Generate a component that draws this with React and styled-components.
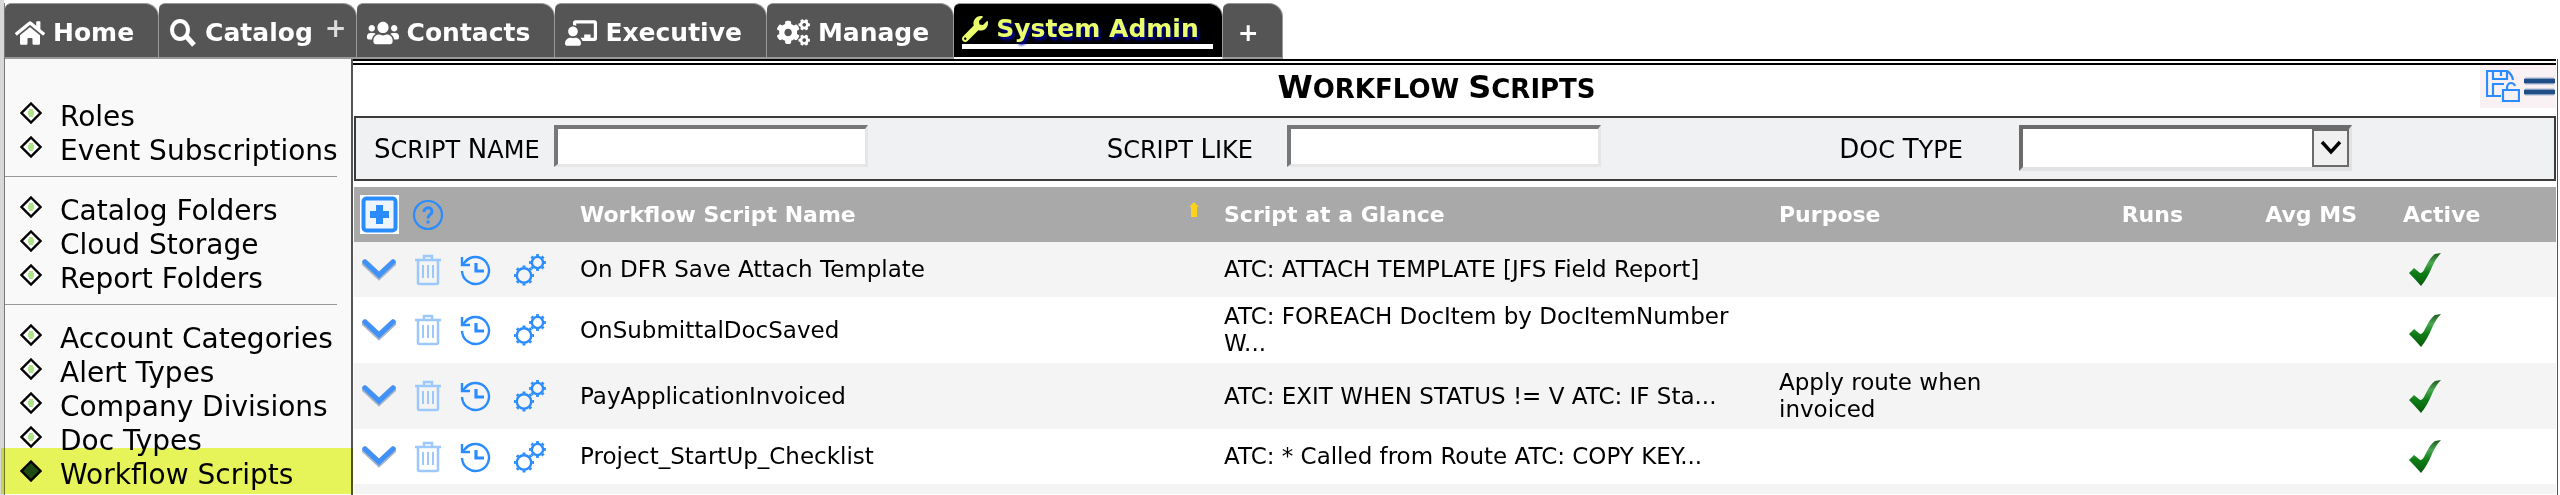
import React from 'react';
import styled, { createGlobalStyle, css } from 'styled-components';
import {
  FaHome,
  FaUsers,
  FaChalkboardTeacher,
  FaCogs,
  FaWrench,
} from 'react-icons/fa';

const blue = '#2a8cff';
const tabGrey = '#555555';
const headGrey = '#a9a9a9';
const lime = '#eaff6b';

const menu = [
  ['Roles', 'Event Subscriptions'],
  ['Catalog Folders', 'Cloud Storage', 'Report Folders'],
  [
    'Account Categories',
    'Alert Types',
    'Company Divisions',
    'Doc Types',
    'Workflow Scripts',
  ],
];

const scripts = [
  {
    name: 'On DFR Save Attach Template',
    glance: 'ATC: ATTACH TEMPLATE [JFS Field Report]',
  },
  {
    name: 'OnSubmittalDocSaved',
    glance: 'ATC: FOREACH DocItem by DocItemNumber W...',
  },
  {
    name: 'PayApplicationInvoiced',
    glance: 'ATC: EXIT WHEN STATUS != V ATC: IF Sta...',
    purpose: 'Apply route when invoiced',
  },
  {
    name: 'Project_StartUp_Checklist',
    glance: 'ATC: * Called from Route ATC: COPY KEY...',
  },
];

const SearchIcon = () => (
  <svg width="28" height="28" viewBox="0 0 28 28" fill="none" stroke="#fff">
    <ellipse cx="11" cy="11" rx="8" ry="9" strokeWidth="4" />
    <path d="M17 17l8 9" strokeWidth="5" />
  </svg>
);

const Diamond = ({ filled }) => (
  <svg width="22" height="22" viewBox="0 0 22 22">
    <path
      d="M11 1.5L20.5 11L11 20.5L1.5 11Z"
      fill={filled ? '#1f4d31' : '#fff'}
      stroke="#000"
      strokeWidth="2.4"
    />
    {!filled && <path d="M11 7v8M8 11h6" stroke="#aee58c" strokeWidth="4" />}
  </svg>
);

const PlusBoxIcon = () => (
  <svg width="39" height="39" viewBox="0 0 39 39">
    <path d="M0 0h39v39H0z" fill="#fff" />
    <rect x="3.5" y="3.5" width="32" height="32" rx="3" fill="#eef5ff" stroke={blue} strokeWidth="4" />
    <path d="M19.5 10v19M10 19.5h19" stroke={blue} strokeWidth="7" />
  </svg>
);

const HelpIcon = () => (
  <svg width="32" height="32" viewBox="0 0 32 32" fill="none" stroke={blue}>
    <circle cx="16" cy="16" r="14" strokeWidth="2.2" />
    <path d="M12 13c0-5.500 8-5.500 8-.500 0 3-4 3-4 7" strokeWidth="3" />
    <path d="M16 21.500v3" strokeWidth="3" />
  </svg>
);

const ChevronIcon = () => (
  <svg width="34" height="22" viewBox="0 0 34 22" fill="none">
    <path d="M3 4l14 13L31 4" stroke="#a9b4c4" strokeWidth="7" strokeLinecap="round" />
    <path d="M3 3l14 13L31 3" stroke="#3f92fa" strokeWidth="5" strokeLinecap="round" />
  </svg>
);

const TrashIcon = () => (
  <svg width="26" height="32" viewBox="0 0 26 32" fill="none" stroke="#9dc8fc">
    <path d="M0 6h26M9 5V2h8v3M3 6v23q0 1 2 1h16q2 0 2-1V6" strokeWidth="2.500" />
    <path d="M8 11v13M13 11v13M18 11v13" strokeWidth="2" />
  </svg>
);

const HistoryIcon = () => (
  <svg width="32" height="32" viewBox="0 0 32 32" fill="none" stroke={blue}>
    <path d="M5 8a13.500 13.500 0 1 1-3 9" strokeWidth="2.400" />
    <path d="M2 3v8h8" strokeWidth="2.400" />
    <path d="M3 10l5-5" strokeWidth="2.400" />
    <path d="M16 9v8h8" strokeWidth="3.200" />
  </svg>
);

const gearTeeth = [0, 45, 90, 135, 180, 225, 270, 315];

const Gear = ({ x, y, r }) => (
  <g transform={`translate(${x} ${y})`}>
    <circle r={r} strokeWidth="2.400" />
    {gearTeeth.map(angle => (
      <path
        key={angle}
        d={`M0 ${-r - 1}v-1.800`}
        strokeWidth="3"
        transform={`rotate(${angle})`}
      />
    ))}
  </g>
);

const GearsIcon = () => (
  <svg width="32" height="32" viewBox="0 0 32 32" fill="none" stroke={blue}>
    <Gear x={10} y={21.5} r={7.2} />
    <Gear x={23.5} y={8.5} r={5.6} />
  </svg>
);

const SortIcon = () => (
  <svg width="12" height="15" viewBox="0 0 12 15">
    <path d="M6 0l5 5H9v10H3V5H1z" fill="#ffd21a" />
  </svg>
);

const CheckIcon = () => (
  <svg width="32" height="33" viewBox="0 0 32 33" role="img" aria-label="Active">
    <defs>
      <linearGradient id="tick" x1="0" y1="0" x2="0" y2="1">
        <stop offset="0" stopColor="#1c5a20" />
        <stop offset="0.3" stopColor="#4ba852" />
        <stop offset="0.6" stopColor="#0f7d17" />
        <stop offset="1" stopColor="#065a0c" />
      </linearGradient>
    </defs>
    <path
      d="M0 20l5-5 6 5q3 0 5-5Q22 3 26 1l6-1q-5 5-9 14-5 12-11 19-6-7-12-13z"
      fill="url(#tick)"
    />
  </svg>
);

const SaveIcon = () => (
  <svg width="34" height="33" viewBox="0 0 34 33" fill="none" stroke={blue} strokeWidth="2.200">
    <path d="M15 26H1V1h20q5 3 6 9M7 1v8h14V1M15 2v4M7 26V14h11" />
    <path d="M17 20h16v11H17zM21 20v-3q1-4 4-4t4 3" />
  </svg>
);

const MenuIcon = () => (
  <svg width="31" height="20" viewBox="0 0 31 20">
    <path d="M1 4h29M1 15h29" stroke="#a8b6cf" strokeWidth="7" />
    <path d="M0 4h31M0 15h31" stroke="#1f4e86" strokeWidth="4.400" />
  </svg>
);

const ArrowIcon = () => (
  <svg width="22" height="16" viewBox="0 0 22 16" fill="none">
    <path d="M2 2l9 10 9-10" stroke="#000" strokeWidth="3.400" />
  </svg>
);

const tabs = [
  { label: 'Home', icon: <FaHome size={30} /> },
  { label: 'Catalog', icon: <SearchIcon />, plus: true },
  { label: 'Contacts', icon: <FaUsers size={32} /> },
  { label: 'Executive', icon: <FaChalkboardTeacher size={32} /> },
  { label: 'Manage', icon: <FaCogs size={33} /> },
  { label: 'System Admin', icon: <FaWrench size={26} />, active: true },
];

const Caps = ({ text }) =>
  text.split(' ').map((word, i) => (
    <React.Fragment key={word}>
      {i > 0 && ' '}
      <Word>{word}</Word>
    </React.Fragment>
  ));

const App = () => (
  <Page>
    <GlobalStyle />
    <TabBar>
      {tabs.map(tab => (
        <Tab key={tab.label} href="#" $active={tab.active}>
          <TabLabel $active={tab.active}>
            {tab.icon}
            {tab.label}
          </TabLabel>
          {tab.plus && <TabPlus>+</TabPlus>}
        </Tab>
      ))}
      <AddTab type="button">+</AddTab>
    </TabBar>
    <Body>
      <Sidebar>
        {menu.map(group => (
          <Group key={group[0]}>
            {group.map(item => {
              const current = item === 'Workflow Scripts';
              return (
                <Item key={item} $current={current}>
                  <Diamond filled={current} />
                  <ItemLink href="#">{item}</ItemLink>
                </Item>
              );
            })}
          </Group>
        ))}
      </Sidebar>
      <Main>
        <TitleBar>
          <Title>
            <Caps text="Workflow Scripts" />
          </Title>
          <Tools>
            <IconButton type="button" aria-label="Save">
              <SaveIcon />
            </IconButton>
            <IconButton type="button" aria-label="Menu">
              <MenuIcon />
            </IconButton>
          </Tools>
        </TitleBar>
        <Filters>
          <Field>
            <Label htmlFor="script-name">
              <Caps text="Script Name" />
            </Label>
            <Input id="script-name" type="text" />
          </Field>
          <Field>
            <Label htmlFor="script-like">
              <Caps text="Script Like" />
            </Label>
            <Input id="script-like" type="text" />
          </Field>
          <Field>
            <Label htmlFor="doc-type">
              <Caps text="Doc Type" />
            </Label>
            <SelectBox>
              <Select id="doc-type">
                <option value="" />
              </Select>
              <SelectArrow>
                <ArrowIcon />
              </SelectArrow>
            </SelectBox>
          </Field>
        </Filters>
        <Table>
          <colgroup>
            <Col $width={220} />
            <Col />
            <Col $width={555} />
            <Col $width={266} />
            <Col $width={150} />
            <Col $width={174} />
            <Col $width={193} />
          </colgroup>
          <thead>
            <tr>
              <ActionHead>
                <Actions>
                  <IconButton type="button" aria-label="Add script">
                    <PlusBoxIcon />
                  </IconButton>
                  <IconButton type="button" aria-label="Help">
                    <HelpIcon />
                  </IconButton>
                </Actions>
              </ActionHead>
              <Head>
                <Sortable>
                  Workflow Script Name
                  <SortIcon />
                </Sortable>
              </Head>
              <Head>Script at a Glance</Head>
              <Head>Purpose</Head>
              <Head $align="right">Runs</Head>
              <Head $align="right">Avg MS</Head>
              <Head $indent>Active</Head>
            </tr>
          </thead>
          <tbody>
            {scripts.map(script => (
              <Row key={script.name}>
                <ActionCell>
                  <Actions>
                    <IconButton type="button" aria-label="Expand">
                      <ChevronIcon />
                    </IconButton>
                    <IconButton type="button" aria-label="Delete">
                      <TrashIcon />
                    </IconButton>
                    <IconButton type="button" aria-label="History">
                      <HistoryIcon />
                    </IconButton>
                    <IconButton type="button" aria-label="Settings">
                      <GearsIcon />
                    </IconButton>
                  </Actions>
                </ActionCell>
                <Cell>{script.name}</Cell>
                <Cell>{script.glance}</Cell>
                <Cell>{script.purpose}</Cell>
                <Cell />
                <Cell />
                <CheckCell>
                  <CheckIcon />
                </CheckCell>
              </Row>
            ))}
            <Row>
              <EndCell colSpan={7} />
            </Row>
          </tbody>
        </Table>
      </Main>
    </Body>
  </Page>
);

const GlobalStyle = createGlobalStyle`
  * {
    box-sizing: border-box;
  }

  body {
    margin: 0;
    font-family: 'DejaVu Sans', Verdana, sans-serif;
    font-size: 23px;
    color: #000;
    background: #fff;
  }

  svg {
    display: block;
    flex: none;
  }
`;

const Page = styled.div`
  display: flex;
  flex-direction: column;
  min-height: 100vh;
  padding: 3px 2px 0 4px;
  background: linear-gradient(90deg, #d8d8d8 4px, #fff 4px);
`;

const TabBar = styled.nav`
  display: flex;
  height: 56px;
  border-left: 1px solid #777;
`;

const tabShape = css`
  height: 56px;
  border: solid #999;
  border-width: 1px 1px 2px 0;
  border-radius: 6px 14px 0 0;
  font: bold 25px/28px 'DejaVu Sans', Verdana, sans-serif;
  color: #fff;
  background: ${tabGrey};
`;

const Tab = styled.a`
  ${tabShape}
  display: flex;
  align-items: ${props => (props.$active ? 'flex-start' : 'center')};
  padding: ${props => (props.$active ? '11px 9px 0 8px' : '4px 24px 0 10px')};
  text-decoration: none;
  ${props =>
    props.$active &&
    css`
      border-color: #999 #999 #fff;
      background: #000;
    `}

  &:has(sup) {
    padding-right: 9px;
  }
`;

const TabLabel = styled.span`
  display: flex;
  align-items: center;
  gap: 8px;
  ${props =>
    props.$active &&
    css`
      padding: 0 14px 1px 0;
      border-bottom: 5px solid #fff;
      color: ${lime};
      text-shadow: 2px 3px 3px #0000a0;
    `}
`;

const TabPlus = styled.sup`
  margin: 0 0 10px 12px;
  font-size: 26px;
  line-height: 28px;
  vertical-align: baseline;
  color: #ddd;
`;

const AddTab = styled.button`
  ${tabShape}
  width: 60px;
  padding: 4px 8px 0 0;
`;

const Body = styled.div`
  display: flex;
  flex: 1;
`;

const Sidebar = styled.aside`
  flex: none;
  width: 347px;
  padding-top: 24px;
  border-left: 1px solid #777;
  background: #f9f9f9;
`;

const Group = styled.ul`
  width: 332px;
  margin: 0;
  padding: 16px 0 9px 15px;
  list-style: none;

  & + & {
    border-top: 1px solid #999;
  }

  &:last-child {
    padding-bottom: 0;
  }
`;

const Item = styled.li`
  position: relative;
  display: flex;
  gap: 18px;
  height: 34px;
  padding-top: 3px;
  line-height: 30px;

  ${props =>
    props.$current &&
    css`
      &::after {
        content: '';
        position: absolute;
        z-index: 1;
        top: -9px;
        left: -19px;
        width: 352px;
        height: 46px;
        background: #ecf95b;
        mix-blend-mode: multiply;
        pointer-events: none;
      }
    `}
`;

const ItemLink = styled.a`
  font-size: 28px;
  white-space: nowrap;
  color: #000;
  text-decoration: none;
`;

const Main = styled.main`
  flex: 1;
  padding-right: 1px;
  border-left: 2px solid #555;
  border-right: 1px solid #555;
  background: #fff;
`;

const TitleBar = styled.header`
  display: flex;
  height: 57px;
  border-top: 6px double #000;
`;

const Word = styled.span`
  display: inline-block;
  text-transform: uppercase;
`;

const Title = styled.h1`
  flex: 1;
  margin: 0;
  padding-left: 40px;
  font-size: 26px;
  line-height: 44px;
  text-align: center;

  ${Word}::first-letter {
    font-size: 32px;
  }
`;

const Tools = styled.div`
  display: flex;
  align-items: center;
  gap: 4px;
  width: 76px;
  height: 43px;
  padding-left: 6px;
  background: #f9f1f3;
`;

const IconButton = styled.button`
  display: flex;
  align-items: center;
  justify-content: center;
  padding: 0;
  border: 0;
  background: none;
`;

const Filters = styled.form`
  display: grid;
  grid-template-columns: repeat(3, 1fr);
  height: 65px;
  margin: 0 0 6px 1px;
  border: 2px solid #3c3a3a;
  background: #f0f1f3;
`;

const Field = styled.div`
  display: flex;
  align-items: flex-start;
  padding: 7px 0 0 18px;
`;

const Label = styled.label`
  width: 180px;
  font-size: 24px;
  line-height: 48px;
  white-space: nowrap;

  ${Word}::first-letter {
    font-size: 26px;
  }
`;

const Input = styled.input`
  width: 314px;
  height: 42px;
  border: solid;
  border-width: 4px 3px 3px 4px;
  border-color: #777 #e6e6e6 #e6e6e6 #777;
  font: inherit;
  background: #fff;
`;

const SelectBox = styled.div`
  position: relative;
  width: 333px;
  height: 46px;
`;

const Select = styled.select`
  appearance: none;
  width: 100%;
  height: 100%;
  border: solid;
  border-width: 4px 3px 4px 4px;
  border-color: #6b6b6b #e2e2e2 #e2e2e2 #6b6b6b;
  border-radius: 0;
  font: inherit;
  background: #fff;
`;

const SelectArrow = styled.span`
  position: absolute;
  top: 4px;
  right: 3px;
  bottom: 4px;
  display: flex;
  align-items: center;
  justify-content: center;
  width: 37px;
  border: 2px solid #6b6b6b;
  background: #f0f0f0;
  pointer-events: none;
`;

const Table = styled.table`
  width: calc(100% - 1px);
  margin-left: 1px;
  border-collapse: collapse;
  table-layout: fixed;
`;

const Col = styled.col`
  width: ${props => (props.$width ? `${props.$width}px` : 'auto')};
`;

const Head = styled.th`
  height: 55px;
  padding: 0 6px 0 ${props => (props.$indent ? 40 : 6)}px;
  font-size: 22px;
  text-align: ${props => props.$align || 'left'};
  color: #fff;
  background: ${headGrey};
`;

const ActionHead = styled(Head)`
  padding: 0;
`;

const Sortable = styled.span`
  display: flex;
  align-items: flex-start;
  justify-content: space-between;
  padding-right: 12px;
`;

const Row = styled.tr`
  background: #fff;

  &:nth-child(odd) {
    background: #f4f4f4;
  }
`;

const Cell = styled.td`
  height: 55px;
  padding: 6px;
  line-height: 27px;
`;

const ActionCell = styled(Cell)`
  padding: 0;
`;

const CheckCell = styled(Cell)`
  padding-left: 46px;
`;

const EndCell = styled.td`
  height: 10px;
  padding: 0;
`;

const Actions = styled.div`
  display: grid;
  grid-template-columns: 50px 48px 48px 60px;
  justify-items: center;
  align-items: center;
`;

export default App;
